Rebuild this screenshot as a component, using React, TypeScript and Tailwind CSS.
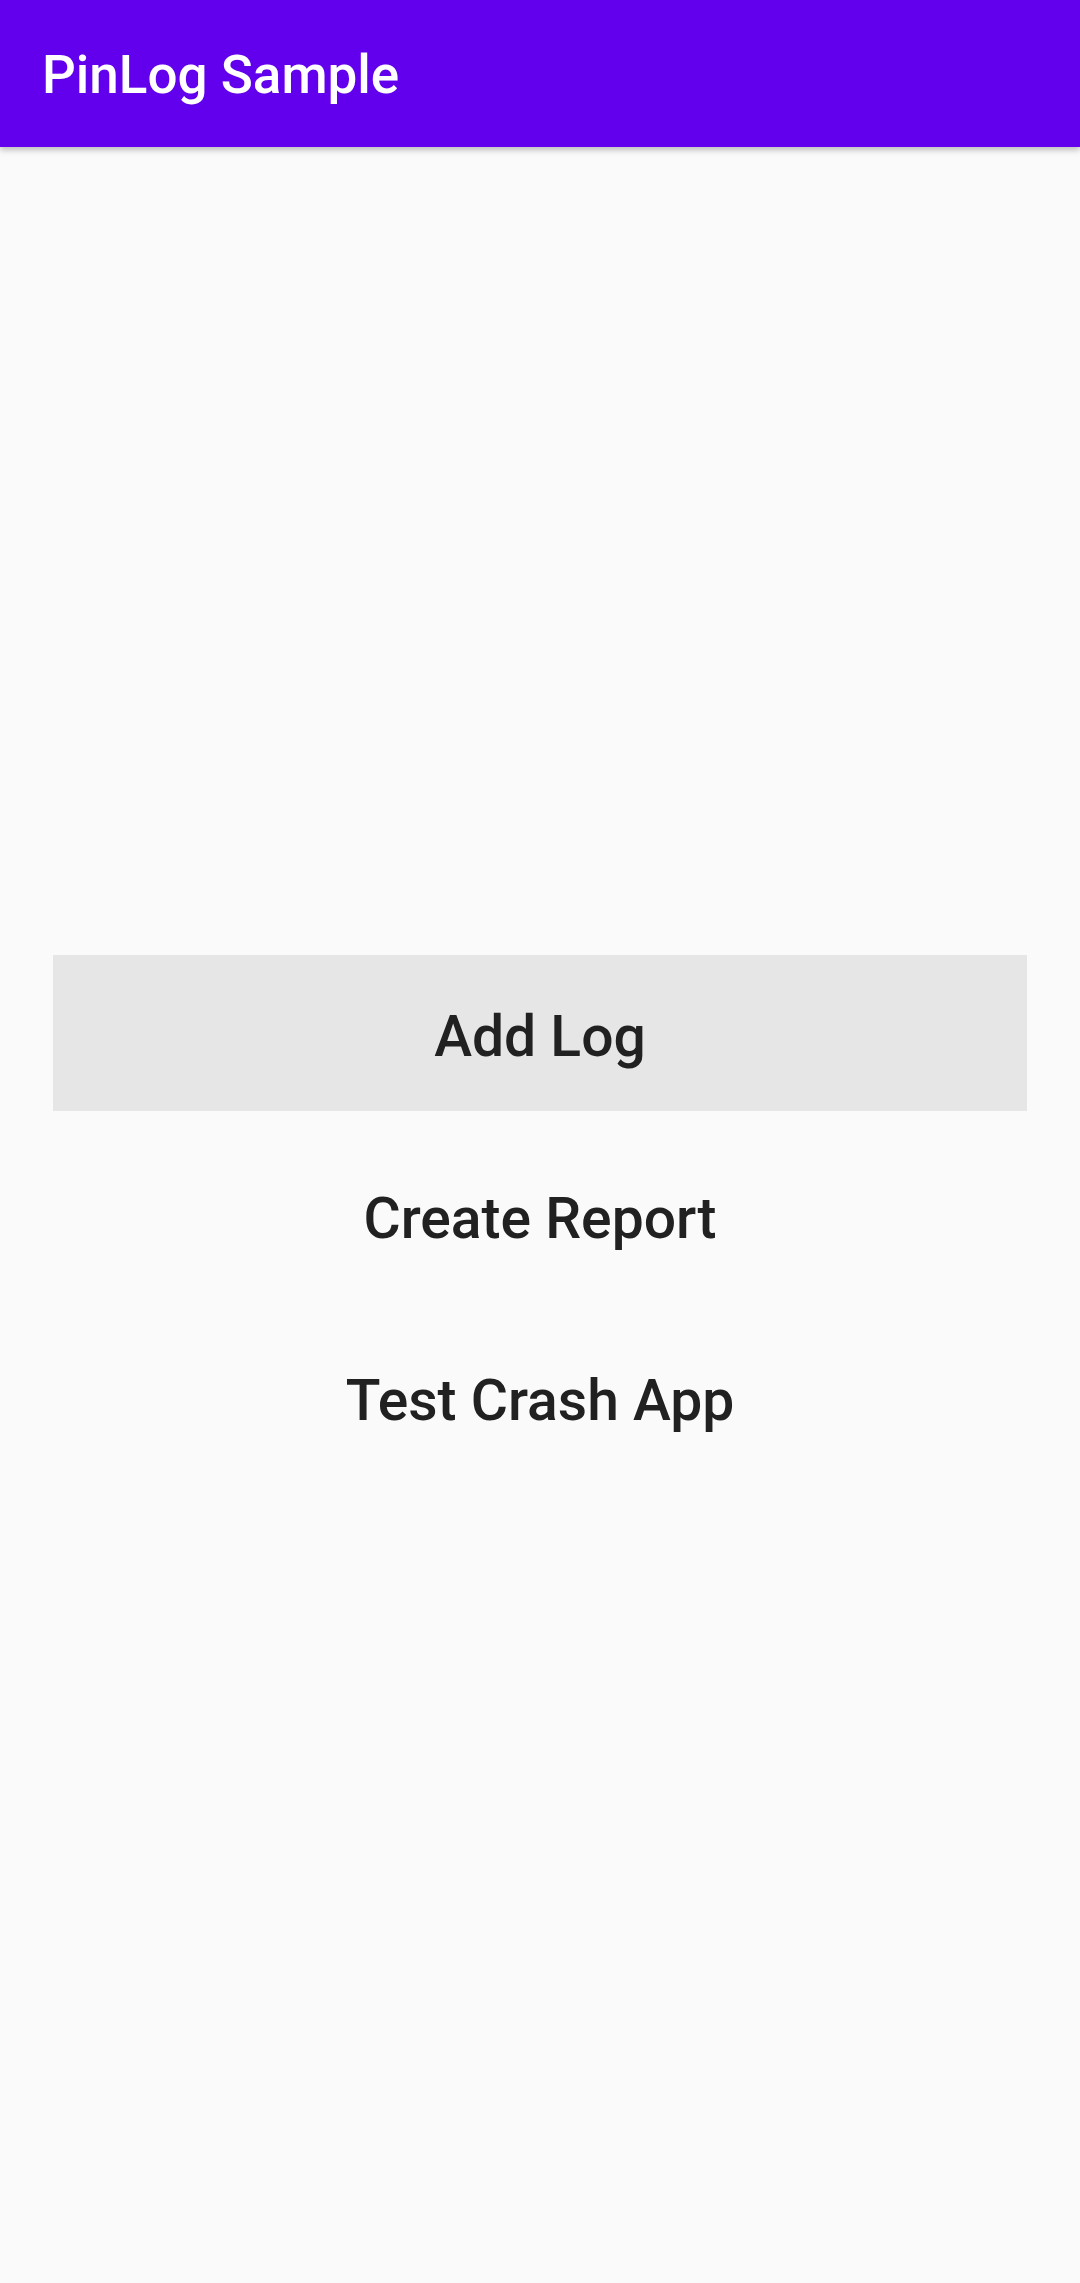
export default function App() {
  return (
    <div className="min-h-[2283px] flex flex-col bg-[#fafafa] font-['Roboto',sans-serif]">
      <header className="h-[147px] shrink-0 bg-[#6200ee] flex items-center px-[42px] shadow-[0_3px_6px_rgba(0,0,0,0.25)] relative z-10">
        <h1 className="text-white text-[53px] font-medium leading-none pt-[4px]">PinLog Sample</h1>
      </header>
      <main className="flex-1 flex flex-col justify-center px-[53px]">
        <button className="h-[156px] my-[13px] bg-[#e6e6e6] text-[#212121] text-[57px] font-medium leading-none pt-[6px]">
          Add Log
        </button>
        <button className="h-[156px] my-[13px] text-[#212121] text-[57px] font-medium leading-none pt-[6px]">
          Create Report
        </button>
        <button className="h-[156px] my-[13px] text-[#212121] text-[57px] font-medium leading-none pt-[6px]">
          Test Crash App
        </button>
      </main>
    </div>
  );
}
